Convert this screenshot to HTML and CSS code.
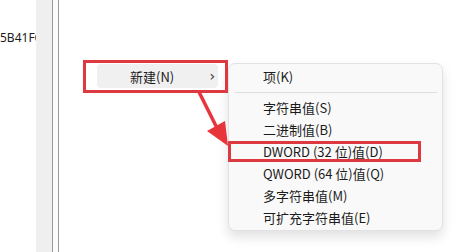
FILE: index.html
```html
<!DOCTYPE html>
<html lang="zh-CN">
<head>
  <meta charset="UTF-8" />
  <title>注册表编辑器 - 新建</title>
  <link rel="stylesheet" href="styles.css">
</head>
<body>
  <div class="pane">
    <div class="tree">
      <div class="tree-row">5B41FC0A</div>
    </div>
    <div class="tree-scroll"></div>
    <div class="splitter"></div>
    <div class="values"></div>
  </div>

  <!-- parent context menu, only the hovered item shows -->
  <div class="ctx-item">
    <span class="ctx-label">新建(N)</span>
    <span class="chev">&#x203A;</span>
  </div>

  <!-- submenu -->
  <ul class="submenu">
    <li>项(K)</li>
    <li class="sep"></li>
    <li>字符串值(S)</li>
    <li>二进制值(B)</li>
    <li>DWORD (32 位)值(D)</li>
    <li>QWORD (64 位)值(Q)</li>
    <li>多字符串值(M)</li>
    <li>可扩充字符串值(E)</li>
  </ul>

  <!-- annotations -->
  <div class="mark mark-new"></div>
  <div class="mark mark-dword"></div>
  <svg class="arrow" width="462" height="252" viewBox="0 0 462 252">
    <line x1="199" y1="92" x2="217" y2="128" stroke="#e8353b" stroke-width="3.5" />
    <polygon points="228,146 207,131 225,121" fill="#e8353b" />
  </svg>
</body>
</html>
```
FILE: styles.css
```css
* { margin: 0; padding: 0; box-sizing: border-box; }
body {
  width: 462px;
  height: 252px;
  overflow: hidden;
  background: #fff;
  font-family: "Noto Sans CJK SC", "Microsoft YaHei", sans-serif;
  font-size: 13px;
  color: #1b1b1b;
  position: relative;
}

.pane {
  display: flex;
  height: 252px;
}
.tree {
  width: 36px;
  overflow: hidden;
  padding-top: 31px;
}
.tree-row {
  white-space: nowrap;
  line-height: 14px;
  font-family: "Noto Sans", sans-serif;
  font-size: 12px;
}
.tree-scroll {
  width: 16px;
  background: #efefef;
}
.splitter {
  width: 7px;
  border-left: 1px solid #9a9a9a;
  border-right: 1px solid #9a9a9a;
  background: #fbfbfb;
}
.values { flex: 1; }

.ctx-item {
  position: absolute;
  left: 97px;
  top: 64px;
  width: 121px;
  height: 24px;
  background: #f0f0f0;
  border-radius: 4px;
  display: flex;
  align-items: center;
  padding-left: 33px;
}
.ctx-label { flex: 1; }
.chev {
  font-family: "DejaVu Sans", sans-serif;
  font-size: 14px;
  margin-right: 3px;
  color: #333;
}

.submenu {
  position: absolute;
  left: 228px;
  top: 63px;
  width: 215px;
  list-style: none;
  background: #f9f9f9;
  border: 1px solid #e2e2e2;
  border-radius: 7px;
  box-shadow: 0 6px 12px rgba(0, 0, 0, 0.12);
  padding: 2px 0 1px;
}
.submenu li {
  height: 22px;
  line-height: 22px;
  padding-left: 34px;
  white-space: nowrap;
}
.submenu li.sep {
  height: 9px;
  margin: 0 5px 0 6px;
  padding: 0;
  position: relative;
}
.submenu li.sep::after {
  content: "";
  position: absolute;
  left: 0;
  right: 0;
  top: 4px;
  border-top: 1px solid #dedede;
}

.mark {
  position: absolute;
  border: 3px solid #dc3a40;
}
.mark-new { left: 83px; top: 60px; width: 145px; height: 33px; }
.mark-dword { left: 228px; top: 141px; width: 193px; height: 21px; }

.arrow {
  position: absolute;
  left: 0;
  top: 0;
}
```
